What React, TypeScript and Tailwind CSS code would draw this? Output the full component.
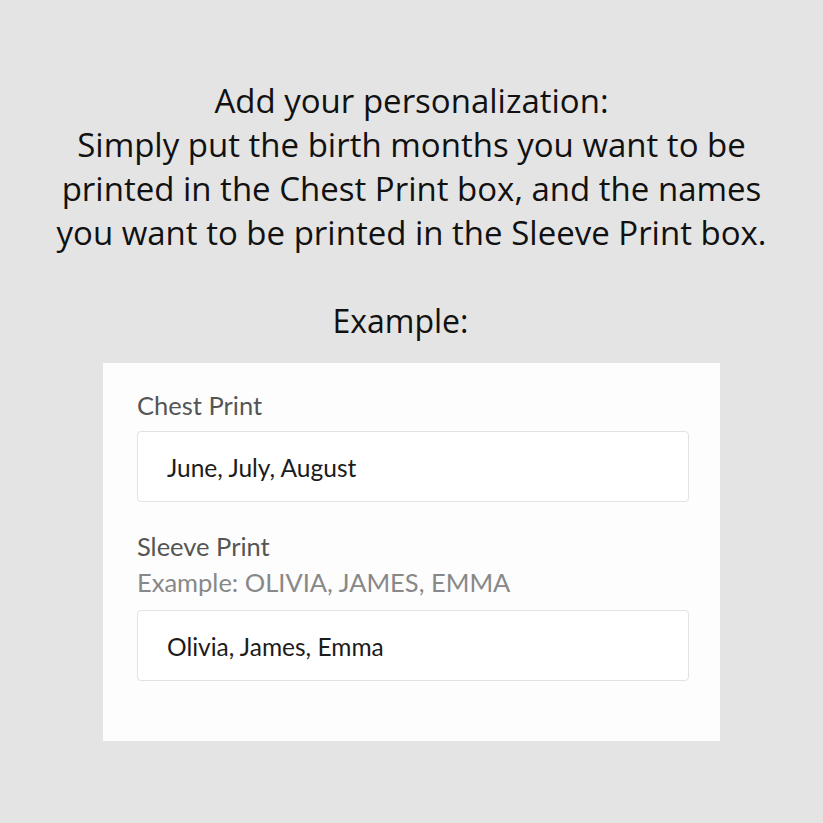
export default function App() {
  return (
    <div className="w-[823px] h-[823px] bg-[#e4e4e4] flex flex-col items-center pt-[79px]" style={{ fontFamily: '"Open Sans", sans-serif' }}>
      <div className="text-center text-[33px] leading-[44px] text-[#111] whitespace-nowrap">
        <p>Add your personalization:</p>
        <p>Simply put the birth months you want to be</p>
        <p>printed in the Chest Print box, and the names</p>
        <p>you want to be printed in the Sleeve Print box.</p>
        <p>&nbsp;</p>
        <p className="pr-[22px] text-[32px]">Example:</p>
      </div>
      <div className="mt-[20px] w-[617px] bg-[#fdfdfd] pl-[34px] pr-[31px] pt-[24px] pb-[60px]" style={{ fontFamily: 'Lato, sans-serif' }}>
        <div className="text-[25.5px] leading-[36px] text-[#555]">Chest Print</div>
        <div className="mt-[8px] h-[71px] border border-[#e2e2e2] rounded-[4px] bg-white flex items-center pl-[29px] pt-[3px] text-[24.5px] text-[#1c1c1c]">June, July, August</div>
        <div className="mt-[26px] text-[25.5px] leading-[36px] text-[#555]">Sleeve Print</div>
        <div className="text-[25.5px] leading-[36px] text-[#888]">Example: OLIVIA, JAMES, EMMA</div>
        <div className="mt-[10px] h-[71px] border border-[#e2e2e2] rounded-[4px] bg-white flex items-center pl-[29px] pt-[3px] text-[24.5px] text-[#1c1c1c]">Olivia, James, Emma</div>
      </div>
    </div>
  );
}
